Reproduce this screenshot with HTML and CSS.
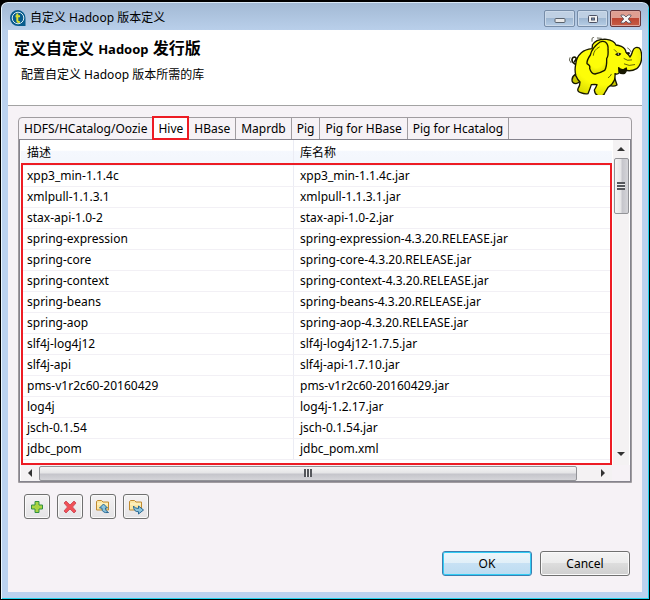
FILE: index.html
```html
<!DOCTYPE html>
<html lang="zh-CN">
<head>
<meta charset="utf-8">
<title>自定义 Hadoop 版本定义</title>
<link rel="stylesheet" href="styles.css">
</head>
<body>
<div class="window">
  <header class="titlebar">
    <svg class="app-icon" width="16" height="16" viewBox="0 0 16 16" aria-hidden="true">
      <path d="M8 0a8 8 0 1 0 0 16h7.500V8A8 8 0 0 0 8 0Z" fill="#075b8c"/>
      <circle cx="8" cy="8" r="5.800" fill="none" stroke="#d9edf3" stroke-width="1"/>
      <path d="M7.300 3.500v7q0 1.500 1.500 1.500h1M5.500 6.300h4.500" fill="none" stroke="#d8df32" stroke-width="2"/>
    </svg>
    <span class="caption">自定义 Hadoop 版本定义</span>
    <div class="window-controls">
      <button class="control" type="button" aria-label="最小化"><svg width="12" height="10" viewBox="0 0 12 10"><rect x="1" y="4.500" width="10" height="4" rx="1" fill="#e9e9e9" stroke="#59626d"/></svg></button>
      <button class="control" type="button" aria-label="最大化"><svg width="12" height="10" viewBox="0 0 12 10"><rect x="1.500" y="1.500" width="9" height="7" rx="1" fill="#f2f2f2" stroke="#4d5265"/><rect x="4.500" y="4" width="3" height="2" fill="#7f9ec2" stroke="#4d5265"/></svg></button>
      <button class="control close" type="button" aria-label="关闭"><svg width="12" height="10" viewBox="0 0 12 10"><path d="M1 1h3l2 2 2-2h3v1L8.200 5 11 8v1H8L6 7 4 9H1V8l2.800-3L1 2Z" fill="#f4f4f4" stroke="#514b59" stroke-width=".8"/></svg></button>
    </div>
  </header>
  <main class="dialog">
    <section class="intro">
      <div class="intro-text">
        <h1>定义自定义 <span class="latin">Hadoop</span> 发行版</h1>
        <p>配置自定义 Hadoop 版本所需的库</p>
      </div>
      <svg class="elephant" width="73" height="58" viewBox="9 15 219 174" aria-hidden="true">
        <defs><radialGradient id="skin" cx=".45" cy=".35" r=".75"><stop offset=".6" stop-color="#fdfd08"/><stop offset="1" stop-color="#cfcf00"/></radialGradient></defs>
        <g stroke="#171700" stroke-width="4" stroke-linejoin="round" stroke-linecap="round">
          <path d="M34 98Q18 94 18 83q2-10 10-7 6 4-2 12" fill="none" stroke-width="5"/>
          <path d="M27 128q-9 6-9 16 0 10 12 11 9-1 14-10Z" fill="#c6c600"/>
          <path d="M128 145l16-13 9 27q-10 6-24 1Z" fill="#c6c600"/>
          <path d="M78 50Q58 52 46 62 30 76 29 98q-4 18 1 34 4 10 12 18 0 12-6 20-3 9 8 12 12 5 22 3 6-14 10-27 10-1 17 0-4 10-8 16 1 14 13 18 15 2 18-9 5-8 10-17 12-6 19-21 3-11 2-20 7 4 13-3 8 1 17-8 17 6 35-4 15-12 15-35 0-21-7-27-14-6-20 9-4 14-8 18-4-7-12-14-1-12-14-18-8-3-16-4-6-14-28-17-32-2-43 17Q80 39 78 50Z" fill="url(#skin)"/>
          <path d="M102 30q9-4 16 0 10 8 8 23 2 18-4 27 1 24-6 35-14 8-29 11-12-1-16-17 3-8-8-14Q62 85 73 69q5-22 29-39Z" fill="url(#skin)"/>
          <path d="M158 107q7 8 16 5l7-4q2 10-5 16-10 3-17-4Z" fill="#181800"/>
          <path d="M174 80q10 8 23 4M175 96q14 8 31 2M127 137q7-4 9-10" fill="none" stroke-width="2"/>
          <path d="M78 28v-9l6-4M94 18l12 1M12 77l-2 7 5 8M145 53l8 8M185 48q7 3 10 11M100 45q-17 8-18 25" fill="none" stroke-width="2"/>
        </g>
        <path d="M147 67q9-9 19-2-3 7-12 7Z" fill="#181800"/><circle cx="157" cy="66" r="2" fill="#fff"/>
        <path d="M180 65q4-9 13-2l-4 5Z" fill="#181800"/>
      </svg>
    </section>
    <section class="body">
      <div class="folder">
        <div class="tabs" role="tablist">
          <button class="tab" type="button" role="tab">HDFS/HCatalog/Oozie</button>
          <button class="tab active" type="button" role="tab" aria-selected="true">Hive</button>
          <button class="tab" type="button" role="tab">HBase</button>
          <button class="tab" type="button" role="tab">Maprdb</button>
          <button class="tab" type="button" role="tab">Pig</button>
          <button class="tab" type="button" role="tab">Pig for HBase</button>
          <button class="tab" type="button" role="tab">Pig for Hcatalog</button>
        </div>
        <div class="viewer">
          <div class="list">
            <table>
              <colgroup><col class="col-desc"><col></colgroup>
              <thead><tr><th scope="col">描述</th><th scope="col">库名称</th></tr></thead>
              <tbody>
                <tr><td>xpp3_min-1.1.4c</td><td>xpp3_min-1.1.4c.jar</td></tr>
                <tr><td>xmlpull-1.1.3.1</td><td>xmlpull-1.1.3.1.jar</td></tr>
                <tr><td>stax-api-1.0-2</td><td>stax-api-1.0-2.jar</td></tr>
                <tr><td>spring-expression</td><td>spring-expression-4.3.20.RELEASE.jar</td></tr>
                <tr><td>spring-core</td><td>spring-core-4.3.20.RELEASE.jar</td></tr>
                <tr><td>spring-context</td><td>spring-context-4.3.20.RELEASE.jar</td></tr>
                <tr><td>spring-beans</td><td>spring-beans-4.3.20.RELEASE.jar</td></tr>
                <tr><td>spring-aop</td><td>spring-aop-4.3.20.RELEASE.jar</td></tr>
                <tr><td>slf4j-log4j12</td><td>slf4j-log4j12-1.7.5.jar</td></tr>
                <tr><td>slf4j-api</td><td>slf4j-api-1.7.10.jar</td></tr>
                <tr><td>pms-v1r2c60-20160429</td><td>pms-v1r2c60-20160429.jar</td></tr>
                <tr><td>log4j</td><td>log4j-1.2.17.jar</td></tr>
                <tr><td>jsch-0.1.54</td><td>jsch-0.1.54.jar</td></tr>
                <tr><td>jdbc_pom</td><td>jdbc_pom.xml</td></tr>
              </tbody>
            </table>
            <div class="highlight"></div>
          </div>
          <div class="scroll vertical" aria-hidden="true">
            <span class="arrow up"></span><span class="thumb"><i class="grip"></i></span><span class="arrow down"></span>
          </div>
          <div class="scroll horizontal" aria-hidden="true">
            <span class="arrow left"></span><span class="thumb"><i class="grip"></i></span><span class="arrow right"></span>
          </div>
          <div class="corner"></div>
        </div>
      </div>
      <div class="toolbar">
        <button class="tool" type="button" aria-label="添加"><svg width="14" height="14" viewBox="0 0 14 14"><path d="M5 1.500h4V5h3.500v4H9v3.500H5V9H1.500V5H5Z" fill="#a9d441" stroke="#319044"/></svg></button>
        <button class="tool" type="button" aria-label="删除"><svg width="14" height="14" viewBox="0 0 14 14"><path d="M3 1l4 4 4-4 2 2-3.500 4 3.500 4-2 2-4-4-4 4-2-2 3.500-4L1 3Z" fill="#f05056" stroke="#cf5360"/></svg></button>
        <button class="tool" type="button" aria-label="导入"><svg width="16" height="16" viewBox="0 0 16 16"><path d="M1.500 11V3q0-1 1-1.500h4L8 3h5.500v8Z" fill="#fbe7a4" stroke="#c08a30"/><path d="M2 5h11" stroke="#fff8d0"/><path d="M8.500 5 12.500 9h-2.200q0 3 3.200 4.500Q7 14.500 6.800 9H4.500Z" fill="#8bc4dc" stroke="#276894"/></svg></button>
        <button class="tool" type="button" aria-label="导出"><svg width="16" height="16" viewBox="0 0 16 16"><path d="M1.500 11V3q0-1 1-1.500h4L8 3h5.500v8Z" fill="#fbe7a4" stroke="#c08a30"/><path d="M2 5h11" stroke="#fff8d0"/><path d="M5.500 7q1 2.500 5 2.500V7l5 4-5 4v-2.300Q5.500 13 5.500 7Z" fill="#8bc4dc" stroke="#276894"/></svg></button>
      </div>
      <footer class="actions">
        <button class="action primary" type="button">OK</button>
        <button class="action" type="button">Cancel</button>
      </footer>
    </section>
  </main>
</div>
</body>
</html>
```

FILE: styles.css
```css
* { box-sizing: border-box; }
body { margin: 0; background: #000; color: #000; font: 12px/16px "Noto Sans", "Noto Sans CJK SC", sans-serif; }
button { margin: 0; padding: 0; color: inherit; font: inherit; }
svg { display: block; flex: none; }

.window {
  display: flex; flex-direction: column; min-height: 100vh; padding: 0 7px 7px;
  border: 1px solid #000; border-top-width: 2px; border-radius: 8px 8px 0 0;
  background: linear-gradient(#a2b9d4, #b9cfea 28px, #bbd2ef 50px, #bbd2ef);
  box-shadow: inset 1px 0 #eaf7ff, inset 0 1px #d9e8f6, inset -1px -1px #20d3ec;
}
.titlebar { display: flex; align-items: center; height: 28px; padding: 4px 1px 0 2px; gap: 4px; }
.caption { flex: 1; }
.window-controls { display: flex; align-self: flex-start; gap: 2px; padding-top: 4px; }
.control {
  display: flex; align-items: center; justify-content: center; width: 31px; height: 17px;
  border: 1px solid #778da8; border-radius: 2px;
  background: linear-gradient(#bfd0e3 50%, #9eb7d2 50%, #b6cde5);
  box-shadow: inset 0 0 0 1px #ccdaea;
}
.close { border-color: #65363b; background: linear-gradient(#df9e91 45%, #bd4633 50%, #c75d45); box-shadow: inset 0 0 0 1px #dfa69d; }

.dialog { display: flex; flex: 1; flex-direction: column; background: #f6f2f6; }
.intro { display: flex; justify-content: space-between; height: 76px; padding-left: 6px; border-bottom: 1px solid #a3a3a3; background: #fff; }
.intro-text { padding-top: 8px; }
h1 { margin: 0; font-size: 16px; line-height: 20px; font-weight: 700; }
h1 .latin { font-size: 13px; }
.intro p { margin: 8px 0 0 7px; }
.elephant { margin-top: 7px; }

.body { display: flex; flex: 1; flex-direction: column; padding: 11px 10px 16px; }
.folder { border: 1px solid #a09ca0; border-radius: 4px 4px 0 0; }
.tabs { display: flex; height: 21px; }
.tab { padding: 0 5px; border: 0; border-right: 1px solid #a09ca0; background: transparent; white-space: nowrap; }
.tab.active { position: relative; background: #fff; }
.tab.active::after { content: ""; position: absolute; inset: -2px -1px -1px; border: 2px solid #ed1c24; z-index: 1; }

.viewer { display: grid; grid-template-columns: 1fr 18px; border: 1px solid #85838d; background: #fff; }
.list { position: relative; padding: 0 0 5px 1px; }
table { width: 100%; border-collapse: separate; border-spacing: 0; table-layout: fixed; }
.col-desc { width: 273px; }
th, td { padding: 0 6px; text-align: left; font-weight: 400; white-space: nowrap; }
th { height: 26px; background: linear-gradient(#fff 40%, #f5f8fe 42%, #f3f6fc); }
td { height: 21px; border-bottom: 1px solid #f2f0f5; }
th:first-child, td:first-child { border-right: 1px solid #ebecf4; }
.highlight { position: absolute; inset: 23px 0 0 1px; border: 2px solid #ed1c24; pointer-events: none; }

.scroll { display: flex; align-items: center; background: #f4f2f3; }
.vertical { flex-direction: column; width: 16px; margin-left: 1px; padding-bottom: 2px; }
.horizontal { height: 16px; margin-left: 1px; }
.corner { background: #f6f2f6; }
.arrow { position: relative; display: flex; flex: none; align-items: center; justify-content: center; width: 18px; height: 18px; }
.arrow::after { content: ""; border: 4px solid transparent; }
.up::after { border-top: 0; border-bottom-color: #333; }
.down { margin-top: auto; }
.down::after { border-bottom: 0; border-top-color: #333; }
.left::after { border-left: 0; border-right-color: #333; }
.right { margin-left: auto; }
.right::after { border-right: 0; border-left-color: #333; }
.thumb { display: flex; align-items: center; justify-content: center; border: 1px solid #929397; border-radius: 2px; }
.vertical .thumb { width: 15px; height: 56px; background: linear-gradient(90deg, #f5f5f5, #e5e5e7 45%, #c5c5cb 55%, #d5d5d9); }
.horizontal .thumb { width: 91%; height: 15px; background: linear-gradient(#f5f5f5, #e5e5e7 45%, #c5c5cb 55%, #d5d5d9); }
.grip { width: 8px; height: 8px; background: repeating-linear-gradient(#55575c 0 2px, #eee 2px 3px); }
.horizontal .grip { background: repeating-linear-gradient(90deg, #55575c 0 2px, #eee 2px 3px); }

.toolbar { display: flex; gap: 7px; padding: 11px 0 0 6px; }
.tool { display: flex; align-items: center; justify-content: center; width: 26px; height: 25px; }
.tool, .action {
  border: 1px solid #707070; border-radius: 3px;
  background: linear-gradient(#f3f3f3, #ebebeb 50%, #dddddd 50%, #cfcfcf);
  box-shadow: inset 0 0 0 1px #fafafa;
}
.tool { background: linear-gradient(#f4f2f4, #e4e3e5); }
.actions { display: flex; justify-content: flex-end; gap: 8px; margin-top: auto; padding-right: 2px; }
.action { width: 90px; height: 25px; }
.primary { border-color: #3c7fb1; background: linear-gradient(#edf6fb, #e0eff8 50%, #c7e1f4 50%, #bcdcf1); box-shadow: inset 0 0 0 1px #32cdf5; }
```
